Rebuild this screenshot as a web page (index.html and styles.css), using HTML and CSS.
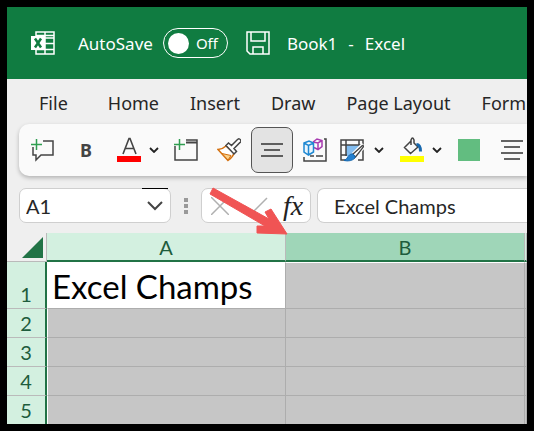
FILE: index.html
```html
<!DOCTYPE html>
<html lang="en">
<head>
  <meta charset="UTF-8">
  <title>Book1 - Excel</title>
  <link rel="stylesheet" href="styles.css">
</head>
<body>
  <div class="window">
    <header class="title-bar">
      <svg class="app-icon" width="24" height="24" viewBox="0 0 24 24" fill="none" stroke="#fff" stroke-width="1.5">
        <path d="M5 5V1h18v22H5v-4M14 1v22M14 7h9M14 12.500h9M5 18.500h18M5 4.500h18"/>
        <rect x="0" y="5" width="14" height="14" fill="#fff" stroke="none"/>
        <path d="M4 7.500l6 9M10 7.500l-6 9" stroke="#107c41" stroke-width="2.500"/>
      </svg>
      <label class="autosave-label" for="autosave">AutoSave</label>
      <span class="toggle">
        <input type="checkbox" id="autosave">
        <span>Off</span>
      </span>
      <button class="save" aria-label="Save">
        <svg width="24" height="24" viewBox="0 0 24 24" fill="none" stroke="#fff" stroke-width="1.500">
          <path d="M1 1h22v22H4l-3-3zM5 1v9h14V1M7 23v-7h10v7"/>
        </svg>
      </button>
      <span class="doc-name">Book1</span>
      <span class="dash">-</span>
      <span>Excel</span>
    </header>

    <nav class="tabs">
      <a class="file" href="#">File</a>
      <a href="#">Home</a>
      <a href="#">Insert</a>
      <a href="#">Draw</a>
      <a href="#">Page Layout</a>
      <a href="#">Form</a>
    </nav>

    <div class="toolbar">
      <button aria-label="New Comment">
        <svg width="24" height="24" viewBox="0 0 24 24" fill="none" stroke="#444" stroke-width="1.500">
          <path d="M12 3h10v14H10l-5 5v-5H2V9"/>
          <path d="M0 6.500h11M5.500 1v11" stroke="#2f9e50"/>
        </svg>
      </button>
      <button class="bold">B</button>
      <div class="split">
        <button aria-label="Font Color">
          <svg width="24" height="26" viewBox="0 0 24 26" fill="none" stroke="#444" stroke-width="1.600">
            <path d="M6 17L12 1.500h1L19 17M8 11.500h9"/>
            <path d="M0 22h24" stroke="#f00" stroke-width="6"/>
          </svg>
        </button>
        <button class="more" aria-label="More font colors">
          <svg width="10" height="6" viewBox="0 0 10 6" fill="none" stroke="#222" stroke-width="1.800"><path d="M1 1l4 4 4-4"/></svg>
        </button>
      </div>
      <button aria-label="New Window">
        <svg width="24" height="24" viewBox="0 0 24 24" fill="none" stroke="#444" stroke-width="1.500">
          <path d="M12 2h11v20H1V8"/>
          <path d="M12 4.500h11" stroke-width="2"/>
          <path d="M0 6.500h11M5.500 1v11" stroke="#2f9e50"/>
        </svg>
      </button>
      <button aria-label="Format Painter">
        <svg width="24" height="24" viewBox="0 0 24 24" fill="none" stroke-width="1.500">
          <path d="M9 8Q6 11 1 11.500L11 22.500Q16 19 17 15z" fill="#fff" stroke="#d4700f"/>
          <path d="M5 15.500l9 2-3 4.500z" fill="#fbd38d" stroke="#d4700f" stroke-width="1"/>
          <path d="M9 7.500l2.500-2.500 3 2.500 6-6q2-1.500 3 .5t-.5 2.500l-6 6 2.500 3-2.500 2.500z" fill="#fff" stroke="#444"/>
        </svg>
      </button>
      <button class="active" aria-label="Middle Align">
        <svg width="22" height="14" viewBox="0 0 22 14" stroke="#333" stroke-width="1.500">
          <path d="M0 1h22M3 7h16M0 13h22"/>
        </svg>
      </button>
      <button aria-label="3D Models">
        <svg width="24" height="24" viewBox="0 0 24 24" fill="none" stroke-width="1.500">
          <path d="M21 1h2v22H1v-4M7 18h4M13 18h7" stroke="#444"/>
          <path d="M10 4l4-3 5 1.500v6l-4 3-4-2M10 4l5 1 4-2.500M15 5v6" stroke="#a83bb0"/>
          <path d="M1 5l5-2 4.500 2v9l-5 3-4.500-3zM1 5l4.500 2.500 5-2.500M5.500 7.500V17" fill="#eaf5fd" stroke="#1f88d2"/>
        </svg>
      </button>
      <div class="split wide">
        <button aria-label="Format as Table">
          <svg width="24" height="24" viewBox="0 0 24 24" fill="none" stroke="#444" stroke-width="1.500">
            <path d="M6 7h14v9l-8 2H6z" fill="#83bdf0" stroke="none"/>
            <path d="M6 22H1V2h22v20h-5M1 7h22M6 2v16M19 2v5M1 17h6"/>
            <path d="M24 7L14 17" stroke="#fff" stroke-width="6"/>
            <path d="M22.500 7.500q1.500 0 .5 2L15.500 19l-3-2.500z" fill="#fff" stroke-width="1.300"/>
            <path d="M12.500 16q3 1 2.500 4-4 4-11 2.500 3-1 4-4 2-3 4.500-2.500z" fill="#2380d0" stroke="#1768ae" stroke-width="1"/>
          </svg>
        </button>
        <button class="more" aria-label="More table styles">
          <svg width="10" height="6" viewBox="0 0 10 6" fill="none" stroke="#222" stroke-width="1.800"><path d="M1 1l4 4 4-4"/></svg>
        </button>
      </div>
      <div class="split">
        <button aria-label="Fill Color">
          <svg width="24" height="26" viewBox="0 0 24 26" fill="none" stroke="#444" stroke-width="1.500">
            <path d="M11 4L4.500 10.500l6 6 7.500-6.500-4-4V3q-1.500-4-3 0v5"/>
            <path d="M16.500 7.500q4 0 4 7" stroke="#1768ae" stroke-width="3"/>
            <path d="M0 22h24" stroke="#ff0" stroke-width="6"/>
          </svg>
        </button>
        <button class="more" aria-label="More fill colors">
          <svg width="10" height="6" viewBox="0 0 10 6" fill="none" stroke="#222" stroke-width="1.800"><path d="M1 1l4 4 4-4"/></svg>
        </button>
      </div>
      <button aria-label="Shape Fill"><span class="swatch"></span></button>
      <button aria-label="Center">
        <svg width="22" height="20" viewBox="0 0 22 20" stroke="#333" stroke-width="1.500">
          <path d="M0 1h22M3 7h16M0 13h22M3 19h16"/>
        </svg>
      </button>
    </div>

    <div class="formula-row">
      <div class="name-box">
        <input type="text" aria-label="Name Box" value="A1">
        <button aria-label="Open name list">
          <svg width="16" height="10" viewBox="0 0 16 10" fill="none" stroke="#444" stroke-width="2"><path d="M1 1l7 7 7-7"/></svg>
        </button>
      </div>
      <span class="grip"><i></i><i></i><i></i></span>
      <div class="formula-buttons">
        <button aria-label="Cancel">
          <svg width="18" height="18" viewBox="0 0 18 18" stroke="#b0b0b0" stroke-width="1.500"><path d="M0 0l18 18M18 0L0 18"/></svg>
        </button>
        <button aria-label="Enter">
          <svg width="24" height="18" viewBox="0 0 24 18" fill="none" stroke="#b0b0b0" stroke-width="1.500"><path d="M1 9l7 7L23 1"/></svg>
        </button>
        <button class="fx" aria-label="Insert Function">fx</button>
      </div>
      <input class="formula" type="text" aria-label="Formula Bar" value="Excel Champs">
    </div>

    <table class="sheet">
      <colgroup>
        <col class="col-num">
        <col class="col-cell">
        <col class="col-cell">
        <col>
      </colgroup>
      <thead>
        <tr>
          <td class="corner"><svg width="21" height="21" viewBox="0 0 21 21"><path d="M21 0v21H0z" fill="#217346"/></svg></td>
          <th>A</th>
          <th class="hover">B</th>
          <th></th>
        </tr>
      </thead>
      <tbody>
        <tr class="first"><th>1</th><td class="current">Excel Champs</td><td></td><td></td></tr>
        <tr><th>2</th><td></td><td></td><td></td></tr>
        <tr><th>3</th><td></td><td></td><td></td></tr>
        <tr><th>4</th><td></td><td></td><td></td></tr>
        <tr><th>5</th><td></td><td></td><td></td></tr>
      </tbody>
    </table>

    <!-- arrow to the edge between columns A and B -->
    <svg class="arrow" width="84" height="50" viewBox="0 0 84 50">
      <path d="M6 1L62 32 58 25 64 22 80 47 50 46V39H58L3 7z" fill="#f05454" stroke="#f05454" stroke-width="1"/>
    </svg>
  </div>
</body>
</html>
```
FILE: styles.css
```css
* {
  box-sizing: border-box;
}
body {
  margin: 0;
  padding: 7px;
  height: 100vh;
  background: #000;
  font-family: "Noto Sans", "Open Sans", sans-serif;
  font-size: 18px;
  color: #262626;
}
button, input {
  margin: 0;
  padding: 0;
  border: 0;
  background: none;
  font: inherit;
  color: inherit;
}
button {
  display: flex;
  align-items: center;
  justify-content: center;
}
svg {
  display: block;
  flex-shrink: 0;
}
.window {
  position: relative;
  height: 100%;
  overflow: hidden;
  background: #efefef;
}

/* title bar */
.title-bar {
  display: flex;
  align-items: center;
  height: 72px;
  padding-left: 24px;
  background: #107c41;
  color: #fff;
  font-size: 17px;
  white-space: nowrap;
}
.autosave-label {
  margin: 0 10px 0 23px;
}
.toggle {
  display: flex;
  align-items: center;
  gap: 7px;
  width: 65px;
  height: 30px;
  padding-left: 4px;
  border: 1px solid #fff;
  border-radius: 15px;
  font-size: 15px;
}
.toggle input {
  appearance: none;
  width: 21px;
  height: 21px;
  border-radius: 50%;
  background: #fff;
}
.save {
  margin: 0 17px 0 18px;
}
.dash {
  margin: 0 11px;
}

/* ribbon tabs */
.tabs {
  display: flex;
  gap: 31px;
  height: 45px;
  padding: 3px 0 0 32px;
  line-height: 42px;
  white-space: nowrap;
}
.tabs a {
  color: inherit;
  text-decoration: none;
}
.tabs .file {
  margin-right: 9px;
}

/* toolbar */
.toolbar {
  display: flex;
  align-items: center;
  gap: 1px;
  height: 52px;
  margin-left: 12px;
  padding-left: 3px;
  border-radius: 10px 0 0 10px;
  background: #fafafa;
  box-shadow: 0 2px 4px rgba(0, 0, 0, 0.25);
}
.toolbar button {
  flex-shrink: 0;
  width: 42px;
  height: 46px;
  border-radius: 7px;
}
.toolbar .bold {
  font-weight: bold;
  color: #444;
}
.toolbar .active {
  border: 1px solid #555;
  background: #e3e3e3;
}
.split {
  display: flex;
  flex-shrink: 0;
  padding: 0 3px;
}
.toolbar .split button {
  width: 36px;
}
.toolbar .split .more {
  width: 14px;
}
.split.wide {
  padding: 0;
}
.toolbar .split.wide button {
  width: 30px;
}
.toolbar .split.wide .more {
  width: 23px;
}
.swatch {
  width: 22px;
  height: 22px;
  background: #62bd80;
}

/* formula bar */
.formula-row {
  display: flex;
  align-items: center;
  height: 57px;
  padding: 2px 0 0 12px;
  font-family: Lato, "Noto Sans", sans-serif;
  font-size: 20px;
}
.name-box, .formula-buttons, .formula {
  height: 35px;
  border: 1px solid #cfcfcf;
  border-radius: 7px;
  background: #fff;
}
.name-box {
  position: relative;
  display: flex;
  width: 152px;
  padding: 0 7px 0 6px;
}
.name-box::after {
  content: "";
  position: absolute;
  top: -1px;
  right: 2px;
  width: 26px;
  height: 1px;
  background: #000;
}
.name-box input {
  flex: 1;
  min-width: 0;
}
.grip {
  display: flex;
  flex-direction: column;
  gap: 2px;
  margin: 0 13px;
}
.grip i {
  width: 4px;
  height: 4px;
  background: #999;
}
.formula-buttons {
  display: flex;
  gap: 15px;
  width: 110px;
  padding: 0 7px 0 9px;
}
.fx {
  font-family: "Liberation Serif", serif;
  font-size: 28px;
  font-style: italic;
  color: #222;
}
.formula {
  flex: 1;
  min-width: 0;
  margin-left: 6px;
  padding-left: 16px;
  border-right: 0;
  border-radius: 7px 0 0 7px;
}

/* sheet */
.sheet {
  width: 100%;
  table-layout: fixed;
  border-spacing: 0;
  font-family: Lato, "Noto Sans", sans-serif;
  font-size: 20px;
  line-height: 24px;
}
.col-num {
  width: 40px;
}
.col-cell {
  width: 239px;
}
.sheet th, .sheet td {
  height: 29px;
  padding: 0;
  font-weight: normal;
}
.sheet th {
  background: #d3f0e0;
  color: #1e5c3c;
}
.sheet thead th {
  border-right: 1px solid #bababa;
  border-bottom: 2px solid #217346;
}
.sheet thead .hover {
  background: #9fd6b8;
}
.sheet .corner {
  border-right: 1px solid #bababa;
  border-bottom: 1px solid #bababa;
}
.corner svg {
  margin-left: 15px;
}
.sheet tbody th {
  border-right: 2px solid #217346;
  border-bottom: 1px solid #bababa;
  line-height: 28px;
  vertical-align: bottom;
}
.sheet tbody td {
  border-right: 1px solid #adadad;
  border-bottom: 1px solid #adadad;
  background: #c6c6c6;
}
.sheet tbody td:nth-child(2) {
  border-left: 1px solid #fff;
}
.sheet .first th, .sheet .first td {
  height: 47px;
}
.sheet .first td {
  border-top: 1px solid #fff;
}
.sheet .first .current {
  padding-left: 4px;
  background: #fff;
  color: #000;
  font-size: 33px;
  line-height: 40px;
}

.arrow {
  position: absolute;
  left: 200px;
  top: 180px;
}
```
